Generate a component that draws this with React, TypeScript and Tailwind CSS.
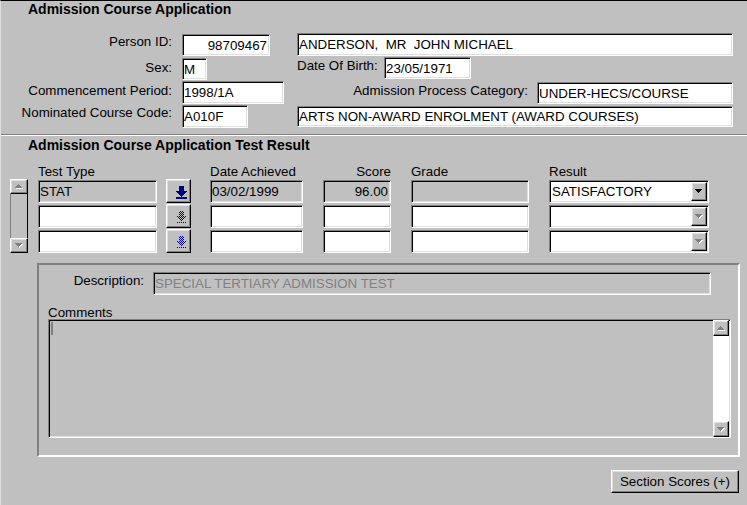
import clsx from 'clsx';

const sunken =
  'border border-t-[#808080] border-l-[#808080] border-b-white border-r-white shadow-[inset_1px_1px_0_#000,inset_-1px_-1px_0_#dfdfdf]';
const raised =
  'border border-t-white border-l-white border-b-black border-r-black shadow-[inset_-1px_-1px_0_#808080,inset_1px_1px_0_#dfdfdf]';

function Field({ className, children, gray }: { className?: string; children?: React.ReactNode; gray?: boolean }) {
  return (
    <div
      className={clsx(
        sunken,
        'flex items-center overflow-hidden whitespace-pre pl-[1px] shrink-0',
        gray ? 'bg-[#c0c0c0]' : 'bg-white',
        className
      )}
    >
      {children}
    </div>
  );
}

function Tri({ up, dim }: { up?: boolean; dim?: boolean }) {
  const rows = up ? [3, 2, 1, 0] : [0, 1, 2, 3];
  const shape = (fill: string, dx: number) =>
    rows.map((inset, y) => <rect key={fill + y} x={inset + dx} y={y + dx} width={7 - inset * 2} height={1} fill={fill} />);
  return (
    <svg width="8" height="5" viewBox="0 0 8 5" shapeRendering="crispEdges">
      {dim && shape('#ffffff', 1)}
      {shape(dim ? '#808080' : '#000000', 0)}
    </svg>
  );
}

// arrow-onto-line glyph, as [y, fromX, toX] pixel runs
const arrowRuns: [number, number, number][] = [
  [0, 3, 7], [1, 3, 7], [2, 3, 7], [3, 3, 7], [4, 3, 7],
  [5, 0, 10], [6, 1, 9], [7, 2, 8], [8, 3, 7], [9, 4, 6], [10, 5, 5],
  [11, 0, 10], [12, 0, 10],
];

function DownToLine({ dim }: { dim?: boolean }) {
  const px: React.ReactNode[] = [];
  for (const [y, a, b] of arrowRuns) {
    if (!dim) {
      px.push(<rect key={y} x={a} y={y} width={b - a + 1} height={1} />);
    } else {
      if (y === 12) continue;
      for (let x = a; x <= b; x++) {
        if ((x + y) % 2 === 0) px.push(<rect key={`${x}-${y}`} x={x} y={y} width={1} height={1} />);
      }
    }
  }
  return (
    <svg width="11" height="13" viewBox="0 0 11 13" shapeRendering="crispEdges">
      <g fill={dim ? '#0000a8' : '#000080'}>{px}</g>
    </svg>
  );
}

function Combo({ value, enabled }: { value?: string; enabled?: boolean }) {
  return (
    <div className={clsx(sunken, 'ml-[20px] w-[160px] h-[23px] bg-white flex items-center shrink-0')}>
      <span className="flex-1 pl-[2px] whitespace-nowrap">{value}</span>
      <div className={clsx(raised, 'w-[16px] h-[19px] mr-[1px] flex items-center justify-center bg-[#c0c0c0]')}>
        <Tri dim={!enabled} />
      </div>
    </div>
  );
}

function TestRow({ first }: { first?: boolean }) {
  return (
    <div className="flex h-[23px]">
      <Field gray={first} className="w-[119px] h-[23px]">{first ? 'STAT' : ''}</Field>
      <div className={clsx(raised, 'ml-[9px] -mt-px w-[25px] h-[24px] flex items-end justify-center pl-[5px] pb-[3px] bg-[#c0c0c0] shrink-0')}>
        <DownToLine dim={!first} />
      </div>
      <Field gray={first} className="ml-[19px] w-[93px] h-[23px]">{first ? '03/02/1999' : ''}</Field>
      <Field gray={first} className="ml-[20px] w-[68px] h-[23px] justify-end pr-[2px]">{first ? '96.00' : ''}</Field>
      <Field gray={first} className="ml-[20px] w-[118px] h-[23px]" />
      <Combo value={first ? 'SATISFACTORY' : ''} enabled={first} />
    </div>
  );
}

export default function App() {
  return (
    <div className="w-[747px] h-[505px] overflow-hidden bg-[#c0c0c0] border-t border-black border-l border-l-[#dfdfdf] font-['Liberation_Sans',Arial,sans-serif] text-[13.33px] leading-[15px] text-black">
      <div className="h-[32px] pl-[27px] font-bold text-[14px] leading-[16px]">Admission Course Application</div>

      <div className="flex h-[24px] items-start">
        <span className="w-[171px] text-right pt-[1px] shrink-0">Person ID:</span>
        <Field className="ml-[10px] w-[88px] h-[22px] mt-px justify-end pr-[2px]">98709467</Field>
        <Field className="ml-[27px] w-[436px] h-[23px]">ANDERSON,  MR  JOHN MICHAEL</Field>
      </div>
      <div className="flex h-[24px] items-start">
        <span className="w-[171px] text-right pt-[3px] shrink-0">Sex:</span>
        <Field className="ml-[10px] w-[25px] h-[22px] mt-px">M</Field>
        <span className="ml-[90px] w-[87px] pt-[1px] shrink-0">Date Of Birth:</span>
        <Field className="w-[87px] h-[22px]">23/05/1971</Field>
      </div>
      <div className="flex h-[24px] items-start">
        <span className="w-[171px] text-right pt-[2px] shrink-0">Commencement Period:</span>
        <Field className="ml-[10px] w-[102px] h-[23px]">1998/1A</Field>
        <span className="w-[244px] text-right pt-[2px] shrink-0">Admission Process Category:</span>
        <Field className="ml-[9px] w-[196px] h-[22px] mt-px">UNDER-HECS/COURSE</Field>
      </div>
      <div className="flex h-[24px] items-start">
        <span className="w-[171px] text-right shrink-0">Nominated Course Code:</span>
        <Field className="ml-[10px] w-[66px] h-[23px]">A010F</Field>
        <Field className="ml-[49px] w-[436px] h-[21px] mt-px">ARTS NON-AWARD ENROLMENT (AWARD COURSES)</Field>
      </div>

      <div className="mt-[5px] h-[2px] border-t border-t-[#808080] border-b border-b-white" />

      <div className="mt-px h-[27px] pl-[27px] font-bold text-[14px] leading-[16px]">
        Admission Course Application Test Result
      </div>

      <div className="flex h-[16px] pl-[37px]">
        <span className="w-[119px] shrink-0">Test Type</span>
        <span className="ml-[53px] w-[93px] shrink-0">Date Achieved</span>
        <span className="ml-[20px] w-[68px] text-right shrink-0">Score</span>
        <span className="ml-[20px] w-[118px] shrink-0">Grade</span>
        <span className="ml-[20px] shrink-0">Result</span>
      </div>

      <div className="flex items-start pl-[9px]">
        <div className="w-[18px] h-[74px] -mt-px flex flex-col shrink-0">
          <div className={clsx(raised, 'h-[15px] flex items-center justify-center bg-[#c0c0c0]')}>
            <Tri up dim />
          </div>
          <div className="flex-1 border-l border-l-[#808080] border-r border-r-black" />
          <div className={clsx(raised, 'h-[15px] flex items-center justify-center bg-[#c0c0c0]')}>
            <Tri dim />
          </div>
        </div>
        <div className="ml-[10px] flex flex-col gap-[2px]">
          <TestRow first />
          <TestRow />
          <TestRow />
        </div>
      </div>

      <div className="mt-[10px] ml-[36px] w-[703px] h-[194px] border-2 border-t-[#808080] border-l-[#808080] border-b-white border-r-white">
        <div className="mt-[7px] flex items-start">
          <span className="w-[105px] text-right pt-[1px] shrink-0">Description:</span>
          <Field gray className="ml-[9px] w-[558px] h-[23px] text-[#808080]">SPECIAL TERTIARY ADMISSION TEST</Field>
        </div>
        <div className="mt-[10px] pl-[9px] h-[14px]">Comments</div>
        <div className={clsx(sunken, 'ml-[9px] w-[683px] h-[119px] flex bg-[#c0c0c0]')}>
          <div className="ml-[2px] mt-[2px] w-[2px] h-[13px] bg-[#808080]" />
          <div className="ml-auto mr-[1px] w-[16px] h-full flex flex-col">
            <div className={clsx(raised, 'h-[16px] flex items-center justify-center bg-[#c0c0c0]')}>
              <Tri up dim />
            </div>
            <div className="flex-1 bg-white" />
            <div className={clsx(raised, 'h-[16px] flex items-center justify-center bg-[#c0c0c0]')}>
              <Tri dim />
            </div>
          </div>
        </div>
      </div>

      <div className="mt-[13px] flex justify-end pr-[8px]">
        <button className={clsx(raised, 'w-[128px] h-[23px] bg-[#c0c0c0] flex items-center justify-center')}>
          Section Scores (+)
        </button>
      </div>
    </div>
  );
}
